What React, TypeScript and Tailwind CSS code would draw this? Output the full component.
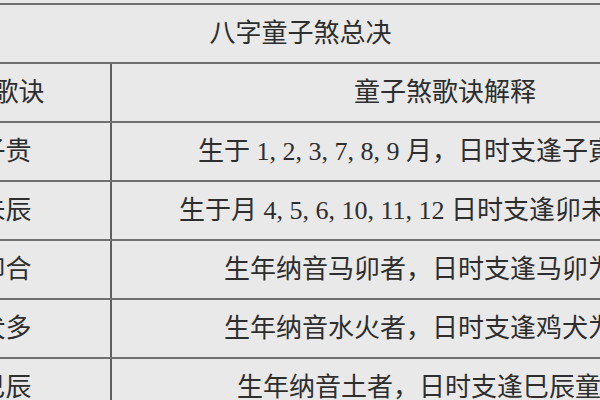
const rows: { verse: string; note: string }[] = [
  { verse: "春秋寅子贵", note: "生于 1, 2, 3, 7, 8, 9 月，日时支逢子寅为童子" },
  { verse: "冬夏卯未辰", note: "生于月 4, 5, 6, 10, 11, 12 日时支逢卯未辰为童子" },
  { verse: "金木马卯合", note: "生年纳音马卯者，日时支逢马卯为童子" },
  { verse: "水火鸡犬多", note: "生年纳音水火者，日时支逢鸡犬为童子" },
  { verse: "土命逢巳辰", note: "生年纳音土者，日时支逢巳辰童子煞" },
];

function Row({ left, right }: { left: string; right: string }) {
  return (
    <div className="grid grid-cols-[289px_1fr] h-[59px] border-b-2 border-[#707070]">
      <div className="flex items-center justify-center border-r-2 border-[#5e5e5e] whitespace-nowrap">
        {left}
      </div>
      <div className="flex items-center justify-center whitespace-nowrap">{right}</div>
    </div>
  );
}

export default function App() {
  return (
    <div
      className="w-[600px] h-[400px] overflow-hidden bg-[#e9e9e9] pt-[3px] text-[26px] leading-none text-[#2e2e2e]"
      style={{ fontFamily: '"Liberation Serif", "Noto Sans CJK SC", serif' }}
    >
      <div className="ml-[-177px] w-[955px] border-t-2 border-[#707070]">
        {/* ── Title ── */}
        <div className="h-[59px] flex items-center justify-center border-b-2 border-[#707070]">
          八字童子煞总决
        </div>

        {/* ── Column headers ── */}
        <Row left="童子煞总歌诀" right="童子煞歌诀解释" />

        {rows.map((r) => (
          <Row key={r.verse} left={r.verse} right={r.note} />
        ))}
      </div>
    </div>
  );
}
